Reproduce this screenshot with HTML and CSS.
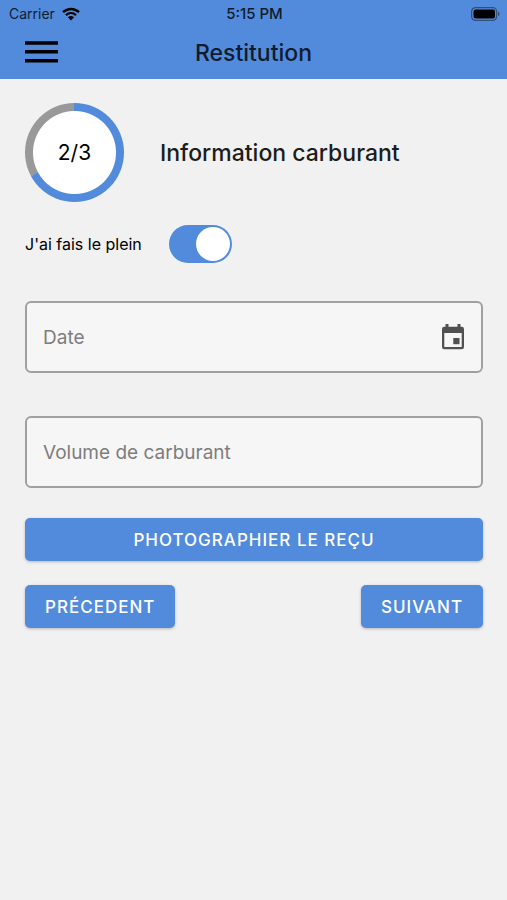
FILE: index.html
```html
<!DOCTYPE html>
<html lang="fr">
<head>
<meta charset="utf-8">
<meta name="viewport" content="width=device-width, initial-scale=1">
<title>Restitution</title>
<link rel="stylesheet" href="styles.css">
</head>
<body>
<header class="top">
  <div class="status">
    <div class="carrier">
      <span>Carrier</span>
      <svg class="wifi" viewBox="0 0 18 14" aria-hidden="true">
        <path d="M1 5.200C5.600.9 12.400.9 17 5.200M3.900 8.100c3-2.700 7.200-2.700 10.200 0" fill="none" stroke="#000" stroke-width="2.300"/>
        <path d="M5.900 10.200c1.800-1.500 4.400-1.500 6.200 0L9 13.400z"/>
      </svg>
    </div>
    <span class="clock">5:15 PM</span>
    <svg class="battery" viewBox="0 0 29 14" aria-hidden="true">
      <rect x=".6" y=".6" width="25" height="12.800" rx="4" fill="none" stroke="#2f4f7c" stroke-width="1.200"/>
      <rect x="2.500" y="2.500" width="21.500" height="9" rx="2"/>
      <path d="M27 4.800c2 .6 2 3.800 0 4.400z" fill="#2f4f7c"/>
    </svg>
  </div>
  <div class="bar">
    <button class="menu" type="button" aria-label="Menu">
      <svg viewBox="0 0 34 24" aria-hidden="true"><path d="M0 2h34M0 11.200h34M0 20.400h34" stroke="#000" stroke-width="3.600"/></svg>
    </button>
    <h1>Restitution</h1>
  </div>
</header>
<main>
  <section class="step">
    <div class="ring"><span>2/3</span></div>
    <h2>Information carburant</h2>
  </section>
  <form>
    <div class="toggle">
      <label for="full">J'ai fais le plein</label>
      <input id="full" type="checkbox" role="switch" checked>
    </div>
    <div class="field">
      <input type="text" placeholder="Date" aria-label="Date">
      <button class="pick" type="button" aria-label="Choisir une date">
        <svg viewBox="0 0 24 26" aria-hidden="true">
          <path fill-rule="evenodd" d="M4.500 0h3v2.800h9V0h3v2.800h1.300A2.200 2.200 0 0 1 23 5v18a2.200 2.200 0 0 1-2.200 2.200H3.200A2.200 2.200 0 0 1 1 23V5a2.200 2.200 0 0 1 2.200-2.200h1.300zM3.300 9v13.900h17.400V9z"/>
          <path d="M12.300 14h6.200v6.200h-6.200z"/>
        </svg>
      </button>
    </div>
    <div class="field">
      <input type="text" placeholder="Volume de carburant" aria-label="Volume de carburant">
    </div>
    <div class="actions">
      <button class="btn wide" type="button">Photographier le reçu</button>
      <button class="btn" type="button">Précedent</button>
      <button class="btn" type="submit">Suivant</button>
    </div>
  </form>
</main>
</body>
</html>
```
FILE: styles.css
```css
* { box-sizing: border-box; }

body {
  margin: 0;
  min-height: 100vh;
  background: #f1f1f1;
  color: #1c1c1c;
  font-family: Inter, "Liberation Sans", sans-serif;
}

button, input { font: inherit; margin: 0; }
svg { display: block; }
h1, h2 { margin: 0; font-size: 23px; font-weight: 500; }

.top { background: #538bdc; color: #101c2e; }

.status {
  display: grid;
  grid-template-columns: 1fr auto 1fr;
  align-items: center;
  height: 27px;
  padding: 0 7px 0 9px;
  font-size: 14px;
}
.carrier { display: flex; align-items: center; gap: 7px; }
.wifi { width: 18px; height: 14px; }
.clock { font-size: 15px; font-weight: 500; }
.battery { width: 29px; height: 14px; justify-self: end; }

.bar {
  display: grid;
  grid-template-columns: 1fr auto 1fr;
  align-items: center;
  height: 52px;
  padding: 0 25px;
}
.menu { width: 33px; padding: 0; border: 0; background: none; }

main { padding: 24px 24px 24px 25px; }

.step { display: flex; align-items: center; gap: 36px; }
.ring {
  display: grid;
  place-items: center;
  flex: none;
  width: 99px;
  height: 99px;
  border-radius: 50%;
  background: radial-gradient(circle closest-side, #fff 41px, transparent 42px), conic-gradient(#538bdc 67%, #999 67%);
  color: #000;
  font-size: 21px;
}

.toggle { display: flex; align-items: center; gap: 27px; margin: 23px 0 38px; }
.toggle label { color: #000; font-size: 16px; }
.toggle input {
  appearance: none;
  display: flex;
  justify-content: flex-end;
  width: 63px;
  height: 38px;
  padding: 2px;
  border-radius: 19px;
  background: #538bdc;
}
.toggle input::before {
  content: "";
  width: 34px;
  height: 34px;
  border-radius: 50%;
  background: #fff;
}
.toggle input:not(:checked) { justify-content: flex-start; background: #999; }

.field {
  display: flex;
  align-items: center;
  height: 72px;
  margin-bottom: 43px;
  padding: 0 16px;
  border: 2px solid #a0a0a0;
  border-radius: 6px;
  background: #f6f6f6;
}
.field:nth-of-type(3) { margin-bottom: 30px; }
.field input {
  flex: 1;
  min-width: 0;
  padding: 0;
  border: 0;
  outline: 0;
  background: none;
  font-size: 19px;
}
.field input::placeholder { color: #7d7d7d; opacity: 1; }
.pick { width: 24px; padding: 0; border: 0; background: none; fill: #505050; }

.actions { display: flex; flex-wrap: wrap; justify-content: space-between; gap: 24px; }
.btn {
  height: 43px;
  padding: 0 20px;
  border: 0;
  border-radius: 5px;
  background: #538bdc;
  box-shadow: 0 1px 3px rgba(0, 0, 0, .25);
  color: #fff;
  font-size: 17px;
  font-weight: 500;
  letter-spacing: 1px;
  text-transform: uppercase;
}
.wide { width: 100%; }
```
